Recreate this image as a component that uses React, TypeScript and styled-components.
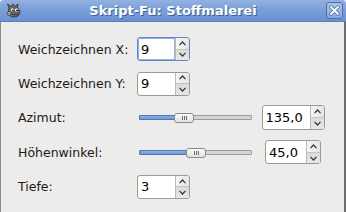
import React from "react";
import styled, { createGlobalStyle } from "styled-components";

const Global = createGlobalStyle`
  html, body { margin: 0; padding: 0; background: #edeceb; }
  body { font-family: "DejaVu Sans", "Liberation Sans", sans-serif; }
`;

const Window = styled.div`
  width: 346px;
  height: 212px;
  box-sizing: border-box;
  display: flex;
  flex-direction: column;
  background: #edeceb;
  overflow: hidden;
`;

const TitleBar = styled.div`
  height: 22px;
  flex: none;
  position: relative;
  display: flex;
  align-items: center;
  justify-content: space-between;
  padding: 0 3px 0 6px;
  background: linear-gradient(#92b1e0, #7b9fd8 45%, #6a91d0);
  border-bottom: 1px solid #5a7fbd;
  box-sizing: border-box;
  border-radius: 4px 4px 0 0;
`;

const Title = styled.div`
  position: absolute;
  left: 0;
  right: 0;
  top: 0;
  bottom: 0;
  display: flex;
  align-items: center;
  justify-content: center;
  color: #ffffff;
  font-family: "DejaVu Sans", sans-serif;
  font-weight: bold;
  font-size: 13px;
  text-shadow: 1px 1px 0 #3d5f95;
  pointer-events: none;
`;

const CloseBtn = styled.div`
  width: 17px;
  height: 17px;
  box-sizing: border-box;
  border: 1px solid #4d6ea6;
  border-radius: 3px;
  background: linear-gradient(#a9c2e8, #89a9dc);
  display: flex;
  align-items: center;
  justify-content: center;
  z-index: 1;
`;

const Body = styled.div`
  flex: 1;
  border-left: 1px solid #8e8e8e;
  border-right: 2px solid #6c6c6c;
  padding: 10px 0 0 17px;
  display: grid;
  grid-template-columns: 119px 1fr;
  grid-auto-rows: 34.4px;
  align-items: center;
`;

const Label = styled.div`
  font-size: 12.5px;
  color: #1a1a1a;
  white-space: nowrap;
`;

const Cell = styled.div`
  display: flex;
  align-items: center;
`;

const Spin = styled.div<{ $w: number; $focus?: boolean; $h?: number }>`
  width: ${(p) => p.$w}px;
  height: ${(p) => p.$h ?? 24}px;
  box-sizing: border-box;
  border: 1px solid ${(p) => (p.$focus ? "#5f8ac9" : "#9a9a9a")};
  border-radius: 3px;
  display: flex;
  background: #fff;
  overflow: hidden;
`;

const SpinEntry = styled.div<{ $focus?: boolean }>`
  flex: 1;
  display: flex;
  align-items: center;
  padding-left: 3px;
  font-size: 13px;
  color: #000;
  border-right: 1px solid ${(p) => (p.$focus ? "#b9b9b9" : "#b9b9b9")};
  box-shadow: ${(p) => (p.$focus ? "inset 0 0 0 1px #8fb0e0" : "none")};
`;

const SpinArrows = styled.div`
  width: 13px;
  display: flex;
  flex-direction: column;
  background: linear-gradient(90deg, #f6f6f5, #e6e5e3);
`;

const Arrow = styled.div<{ $down?: boolean }>`
  flex: 1;
  display: flex;
  align-items: center;
  justify-content: center;
  border-top: ${(p) => (p.$down ? "1px solid #c4c4c4" : "none")};
  background: ${(p) => (p.$down ? "linear-gradient(#dcdbd9,#e8e7e5)" : "transparent")};
`;

const SliderWrap = styled.div`
  width: 119px;
  display: flex;
  align-items: center;
  padding-left: 2px;
  box-sizing: border-box;
`;

const Trough = styled.div`
  position: relative;
  width: 113px;
  height: 5px;
  box-sizing: border-box;
  border: 1px solid #9c9c9c;
  background: #d6d5d3;
  border-radius: 1px;
`;

const Fill = styled.div`
  position: absolute;
  left: -1px;
  top: -1px;
  height: 5px;
  box-sizing: border-box;
  border: 1px solid #4f78b5;
  background: linear-gradient(#8db0e0, #6f97d2);
  border-radius: 1px;
`;

const Thumb = styled.div`
  position: absolute;
  top: -3px;
  width: 20px;
  height: 10px;
  box-sizing: border-box;
  border: 1px solid #8a8a8a;
  border-radius: 3px;
  background: linear-gradient(#fbfbfb, #e2e1df);
  display: flex;
  align-items: center;
  justify-content: center;
  gap: 1px;
`;

const Grip = styled.span`
  width: 1px;
  height: 4px;
  background: #6a6a6a;
`;

const SpinArea = styled.div`
  flex: 1;
  display: flex;
  justify-content: center;
  padding-right: 14px;
`;

const Up = () => (
  <svg width="7" height="5" viewBox="0 0 7 5">
    <path d="M0.5 4.2 L3.5 1 L6.5 4.2" fill="none" stroke="#333" strokeWidth="1.2" />
  </svg>
);
const Down = () => (
  <svg width="7" height="5" viewBox="0 0 7 5">
    <path d="M0.5 0.8 L3.5 4 L6.5 0.8" fill="none" stroke="#333" strokeWidth="1.2" />
  </svg>
);

const SpinButton: React.FC<{ value: string; w: number; focus?: boolean; h?: number }> = ({ value, w, focus, h }) => (
  <Spin $w={w} $focus={focus} $h={h}>
    <SpinEntry $focus={focus}>{value}</SpinEntry>
    <SpinArrows>
      <Arrow><Up /></Arrow>
      <Arrow $down><Down /></Arrow>
    </SpinArrows>
  </Spin>
);

const Slider: React.FC<{ frac: number }> = ({ frac }) => {
  const left = Math.round(frac * 93);
  return (
    <SliderWrap>
      <Trough>
        <Fill style={{ width: left + 11 }} />
        <Thumb style={{ left: left - 1 }}>
          <Grip /><Grip /><Grip />
        </Thumb>
      </Trough>
    </SliderWrap>
  );
};

const Wilber = () => (
  <svg width="16" height="15" viewBox="0 0 16 15">
    <path d="M3 5 L1.5 1 L5 3.5 L7 1 L8.5 3.5 L12 1 L11.5 5 Q14.5 7 14 10 Q13 14 8 14 Q3 14 2.5 10 Q2 7 3 5 Z" fill="#6b6b6b" stroke="#2f2f2f" strokeWidth="0.8" />
    <path d="M1 10 Q2 7.5 5 8.5 Q6 12 3 12.5 Q1 12.5 1 10 Z" fill="#9a9a9a" stroke="#2f2f2f" strokeWidth="0.6" />
    <circle cx="6.5" cy="7" r="2" fill="#fff" stroke="#222" strokeWidth="0.5" />
    <circle cx="10.5" cy="7" r="2" fill="#fff" stroke="#222" strokeWidth="0.5" />
    <circle cx="7" cy="7.3" r="0.9" fill="#000" />
    <circle cx="11" cy="7.3" r="0.9" fill="#000" />
    <path d="M6 11 Q9 12.5 12 11" fill="none" stroke="#222" strokeWidth="0.7" />
  </svg>
);

const CloseIcon = () => (
  <svg width="11" height="11" viewBox="0 0 11 11">
    <path d="M2 2 L9 9 M9 2 L2 9" stroke="#4d6ea6" strokeWidth="3.4" strokeLinecap="round" />
    <path d="M2 2 L9 9 M9 2 L2 9" stroke="#ffffff" strokeWidth="1.8" strokeLinecap="round" />
  </svg>
);

export default function App() {
  return (
    <>
      <Global />
      <Window>
        <TitleBar>
          <Wilber />
          <Title>Skript-Fu: Stoffmalerei</Title>
          <CloseBtn><CloseIcon /></CloseBtn>
        </TitleBar>
        <Body>
          <Label>Weichzeichnen X:</Label>
          <Cell><SpinButton value="9" w={53} focus /></Cell>
          <Label>Weichzeichnen Y:</Label>
          <Cell><SpinButton value="9" w={53} /></Cell>
          <Label>Azimut:</Label>
          <Cell>
            <Slider frac={135 / 360} />
            <SpinArea><SpinButton value="135,0" w={63} h={25} /></SpinArea>
          </Cell>
          <Label>Höhenwinkel:</Label>
          <Cell>
            <Slider frac={45 / 90} />
            <SpinArea><SpinButton value="45,0" w={56} /></SpinArea>
          </Cell>
          <Label>Tiefe:</Label>
          <Cell><SpinButton value="3" w={53} /></Cell>
        </Body>
      </Window>
    </>
  );
}
